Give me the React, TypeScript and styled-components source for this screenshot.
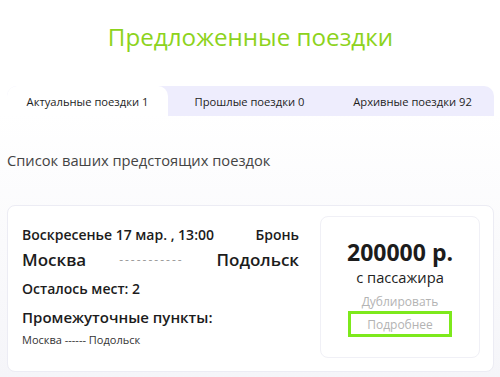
import React, { useState } from 'react';
import styled, { createGlobalStyle } from 'styled-components';

const GlobalStyle = createGlobalStyle`
    html, body {
        margin: 0;
        padding: 0;
    }
    body {
        font-family: "Open Sans", "Noto Sans", sans-serif;
        background: linear-gradient(180deg, #ffffff 0%, #ffffff 30%, #f5f5f9 100%);
        min-height: 377px;
        color: #222;
    }
`;

const Page = styled.div`
    padding: 0 6px 0 7px;
    min-height: 377px;
    box-sizing: border-box;
`;

const Title = styled.h1`
    margin: 0;
    padding-top: 19px;
    height: 86px;
    box-sizing: border-box;
    text-align: center;
    font-size: 24.2px;
    font-weight: 500;
    line-height: 36px;
    color: #8dd31c;
`;

const Tabs = styled.div`
    display: grid;
    grid-template-columns: 161px 1fr 1fr;
    height: 30px;
    background: #eeedfd;
    border-radius: 10px 10px 0 0;
`;

const Tab = styled.button<{ $active?: boolean }>`
    border: none;
    margin: 0;
    padding: 0;
    font-family: inherit;
    font-size: 11.2px;
    font-weight: 500;
    color: #1e1e1e;
    background: ${p => (p.$active ? '#ffffff' : 'transparent')};
    border-radius: ${p => (p.$active ? '10px 10px 0 0' : '0')};
    cursor: pointer;
`;

const Subtitle = styled.h2`
    margin: 0;
    padding: 33px 0 0;
    height: 89px;
    box-sizing: border-box;
    font-size: 14.7px;
    font-weight: 400;
    line-height: 22px;
    color: #444;
`;

const Card = styled.div`
    display: flex;
    justify-content: space-between;
    background: #fff;
    border: 1px solid #ececf4;
    border-radius: 8px;
    padding: 10px 13px 13px 14px;
`;

const Info = styled.div`
    width: 277px;
    padding-top: 9px;
`;

const Row = styled.div<{ $top?: number }>`
    display: flex;
    justify-content: space-between;
    align-items: center;
    margin-top: ${p => p.$top ?? 0}px;
`;

const DateText = styled.span`
    font-size: 14px;
    font-weight: 600;
    color: #1c1c1c;
`;

const City = styled.span`
    font-size: 17px;
    font-weight: 600;
    color: #1c1c1c;
`;

const Dashes = styled.span`
    color: #9c9c9c;
    font-size: 12px;
    letter-spacing: 2px;
`;

const Line = styled.div<{ $size: number; $top: number }>`
    font-size: ${p => p.$size}px;
    font-weight: 600;
    color: #1c1c1c;
    margin-top: ${p => p.$top}px;
`;

const Points = styled.div`
    font-size: 11px;
    color: #333;
    margin-top: 5px;
`;

const PriceBox = styled.div`
    width: 160px;
    height: 142px;
    border: 1px solid #f0f0f6;
    border-radius: 8px;
    display: flex;
    flex-direction: column;
    align-items: center;
    padding-top: 20px;
    box-sizing: border-box;
`;

const Price = styled.div`
    font-size: 23px;
    font-weight: 700;
    line-height: 30px;
    color: #1c1c1c;
`;

const PriceNote = styled.div`
    font-size: 14.7px;
    line-height: 20px;
    color: #222;
`;

const LinkButton = styled.button<{ $framed?: boolean }>`
    font-family: inherit;
    font-size: 12px;
    color: #b3b3b3;
    background: none;
    border: ${p => (p.$framed ? '3px solid #7de91c' : 'none')};
    width: ${p => (p.$framed ? '104px' : 'auto')};
    height: ${p => (p.$framed ? '26px' : '18px')};
    padding: 0;
    margin-top: ${p => (p.$framed ? '1px' : '5px')};
    cursor: pointer;
`;

const tabs = [
    { name: 'Актуальные поездки', count: 1 },
    { name: 'Прошлые поездки', count: 0 },
    { name: 'Архивные поездки', count: 92 },
];

export default function App() {
    const [active, setActive] = useState(0);

    return (
        <>
            <GlobalStyle />
            <Page>
                <Title>Предложенные поездки</Title>
                <Tabs>
                    {tabs.map((tab, index) => (
                        <Tab key={index} $active={active === index} onClick={() => setActive(index)}>
                            {tab.name} {tab.count}
                        </Tab>
                    ))}
                </Tabs>
                <Subtitle>Список ваших предстоящих поездок</Subtitle>
                <Card>
                    <Info>
                        <Row>
                            <DateText>Воскресенье 17 мар. , 13:00</DateText>
                            <DateText>Бронь</DateText>
                        </Row>
                        <Row $top={4}>
                            <City>Москва</City>
                            <Dashes>-----------</Dashes>
                            <City>Подольск</City>
                        </Row>
                        <Line $size={14} $top={8}>Осталось мест: 2</Line>
                        <Line $size={15} $top={9}>Промежуточные пункты:</Line>
                        <Points>Москва ------ Подольск</Points>
                    </Info>
                    <PriceBox>
                        <Price>200000 р.</Price>
                        <PriceNote>с пассажира</PriceNote>
                        <LinkButton>Дублировать</LinkButton>
                        <LinkButton $framed>Подробнее</LinkButton>
                    </PriceBox>
                </Card>
            </Page>
        </>
    );
}
